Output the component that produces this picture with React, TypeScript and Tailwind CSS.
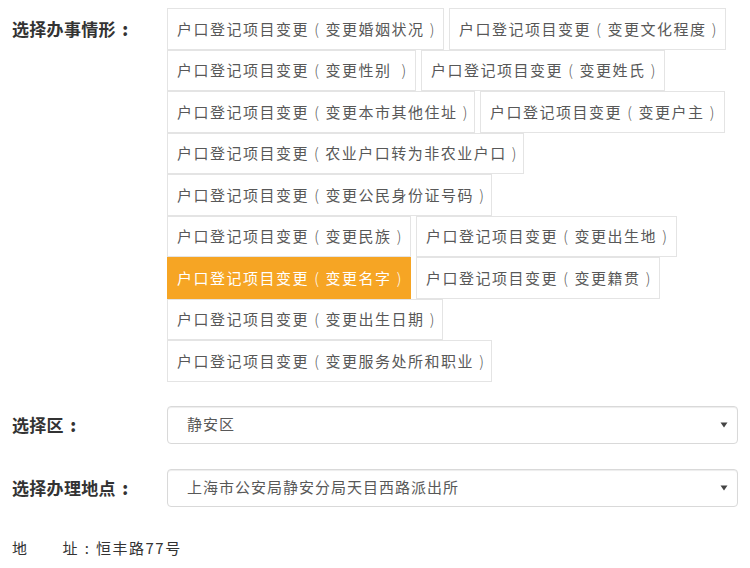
const FONT = "font-['Noto_Sans_CJK_SC','Noto_Sans',sans-serif]";

type Item = { text: string; w: number; active?: boolean };

const ROWS: Item[][] = [
  [
    { text: "户口登记项目变更（变更婚姻状况）", w: 277 },
    { text: "户口登记项目变更（变更文化程度）", w: 277 },
  ],
  [
    { text: "户口登记项目变更（变更性别 ）", w: 249 },
    { text: "户口登记项目变更（变更姓氏）", w: 244 },
  ],
  [
    { text: "户口登记项目变更（变更本市其他住址）", w: 308 },
    { text: "户口登记项目变更（变更户主）", w: 245 },
  ],
  [{ text: "户口登记项目变更（农业户口转为非农业户口）", w: 357 }],
  [{ text: "户口登记项目变更（变更公民身份证号码）", w: 325 }],
  [
    { text: "户口登记项目变更（变更民族）", w: 244 },
    { text: "户口登记项目变更（变更出生地）", w: 261 },
  ],
  [
    { text: "户口登记项目变更（变更名字）", w: 244, active: true },
    { text: "户口登记项目变更（变更籍贯）", w: 244 },
  ],
  [{ text: "户口登记项目变更（变更出生日期）", w: 276 }],
  [{ text: "户口登记项目变更（变更服务处所和职业）", w: 325 }],
];

const HALF: Record<string, string> = { "（": "(", "）": ")", "：": ":" };

// full-width punctuation drawn centred in its em box, as the original font does
function Punct({ text, box }: { text: string; box: string }) {
  const parts = text.split(/([（）：])/);
  return (
    <>
      {parts.map((p, i) =>
        HALF[p] ? (
          <span key={i} className={`inline-block text-center ${box}`}>
            {HALF[p]}
          </span>
        ) : (
          <span key={i} className="whitespace-pre">{p}</span>
        )
      )}
    </>
  );
}

function Option({ item }: { item: Item }) {
  return (
    <div
      className={`h-[41.5px] flex items-center pl-[9px] whitespace-nowrap overflow-hidden text-[15px] tracking-[1.5px] border ${
        item.active
          ? "bg-[#f6a524] border-[#f6a524] text-white"
          : "bg-white border-[#e4e4e4] text-[#585858]"
      }`}
      style={{ width: item.w }}
    >
      <Punct text={item.text} box="w-[16.5px] font-light" />
    </div>
  );
}

function Caret() {
  return (
    <svg width="8" height="6" viewBox="0 0 8 6" className="shrink-0">
      <polygon points="0.5,0.5 7.5,0.5 4,5.5" fill="#444" />
    </svg>
  );
}

function FakeSelect({ value }: { value: string }) {
  return (
    <div className="w-[571px] h-[38px] flex items-center justify-between pl-[19px] pr-[9px] rounded-[4px] border border-[#d9d9d9] bg-white shadow-[inset_0_1px_1px_rgba(0,0,0,0.075)] text-[15px] tracking-[1px] text-[#585858]">
      <span>{value}</span>
      <Caret />
    </div>
  );
}

function Label({ text }: { text: string }) {
  return (
    <div className="w-[155px] text-[17px] font-bold text-[#333] tracking-[0.3px] whitespace-nowrap">
      <Punct text={text} box="w-[19px] font-black" />
    </div>
  );
}

export default function App() {
  return (
    <div className={`w-[750px] h-[568px] bg-white pl-[12px] pt-[8px] ${FONT}`}>
      {/* handling type */}
      <div className="flex">
        <div className="h-[41.5px] flex items-center">
          <Label text="选择办事情形：" />
        </div>
        <div className="flex flex-col">
          {ROWS.map((row, i) => (
            <div key={i} className="flex gap-[5px]">
              {row.map((item) => (
                <Option key={item.text} item={item} />
              ))}
            </div>
          ))}
        </div>
      </div>

      {/* district */}
      <div className="flex items-center mt-[24px]">
        <Label text="选择区：" />
        <FakeSelect value="静安区" />
      </div>

      {/* location */}
      <div className="flex items-center mt-[25px]">
        <Label text="选择办理地点：" />
        <FakeSelect value="上海市公安局静安分局天目西路派出所" />
      </div>

      {/* address */}
      <div className="mt-[30px] text-[15px] tracking-[1.5px] text-[#333]">
        地<span className="inline-block w-[34px]" />
        <Punct text="址：恒丰路77号" box="w-[17px]" />
      </div>
    </div>
  );
}
